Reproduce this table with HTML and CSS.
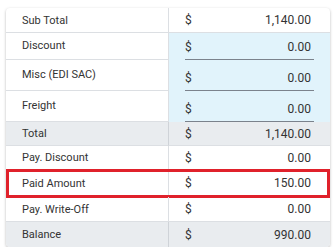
FILE: index.html
```html
<!DOCTYPE html>
<html>
<head>
<meta charset="utf-8">
<link rel="stylesheet" href="styles.css">
</head>
<body>
<div class="card">
  <div class="row h24">
    <div class="label">Sub Total</div>
    <div class="value"><span>$</span><span>1,140.00</span></div>
  </div>
  <div class="row h26 edit">
    <div class="label">Discount</div>
    <div class="value"><div class="input"><span>$</span><span>0.00</span></div></div>
  </div>
  <div class="row h30 edit">
    <div class="label">Misc (EDI SAC)</div>
    <div class="value"><div class="input"><span>$</span><span>0.00</span></div></div>
  </div>
  <div class="row h30 edit">
    <div class="label">Freight</div>
    <div class="value"><div class="input"><span>$</span><span>0.00</span></div></div>
  </div>
  <div class="row h23 shade">
    <div class="label">Total</div>
    <div class="value"><span>$</span><span>1,140.00</span></div>
  </div>
  <div class="row h23">
    <div class="label">Pay. Discount</div>
    <div class="value"><span>$</span><span>0.00</span></div>
  </div>
  <div class="row h26 highlight">
    <div class="label">Paid Amount</div>
    <div class="value"><span>$</span><span>150.00</span></div>
  </div>
  <div class="row h24">
    <div class="label">Pay. Write-Off</div>
    <div class="value"><span>$</span><span>0.00</span></div>
  </div>
  <div class="row h25 shade last">
    <div class="label">Balance</div>
    <div class="value"><span>$</span><span>990.00</span></div>
  </div>
</div>
</body>
</html>
```

FILE: styles.css
```css
html, body {
  margin: 0;
  padding: 0;
  background: #fff;
}
body {
  font-family: Roboto, "Liberation Sans", sans-serif;
  color: #333;
}
.card {
  margin: 8px 0 0 6px;
  width: 324px;
  background: #fff;
  border-radius: 4px;
  box-shadow: 0 1px 3px rgba(0, 0, 0, 0.28);
  overflow: hidden;
}
.row {
  display: grid;
  grid-template-columns: 163px 161px;
  position: relative;
}
.row.h23 { height: 24px; }
.row.h24 { height: 25px; }
.row.h25 { height: 25px; }
.row.h26 { height: 27px; }
.row.h30 { height: 31px; }
.label {
  display: flex;
  align-items: center;
  padding-left: 16px;
  font-size: 11px;
  border-right: 1px solid #dcdfe3;
  border-bottom: 1px solid #dcdfe3;
}
.value {
  display: flex;
  align-items: center;
  justify-content: space-between;
  padding: 0 19px 0 16px;
  font-size: 12px;
  border-bottom: 1px solid #dcdfe3;
}
.last .label, .last .value {
  border-bottom: none;
}
.shade .label, .shade .value {
  background: #e9ecef;
}
.shade .label {
  border-right-color: #cfd3d8;
}
.edit .value {
  background: #e1f3fb;
  border-bottom: none;
  padding: 0 16px;
  align-items: stretch;
}
.edit .label {
  padding-bottom: 1px;
}
.input {
  flex: 1;
  display: flex;
  justify-content: space-between;
  align-items: flex-end;
  padding: 0 3px 5px 0;
  border-bottom: 1px solid #7b828c;
}
.highlight::after {
  content: "";
  position: absolute;
  left: 0;
  right: 0;
  top: -1px;
  bottom: -1px;
  border: 3px solid #e0212b;
  pointer-events: none;
}
```
